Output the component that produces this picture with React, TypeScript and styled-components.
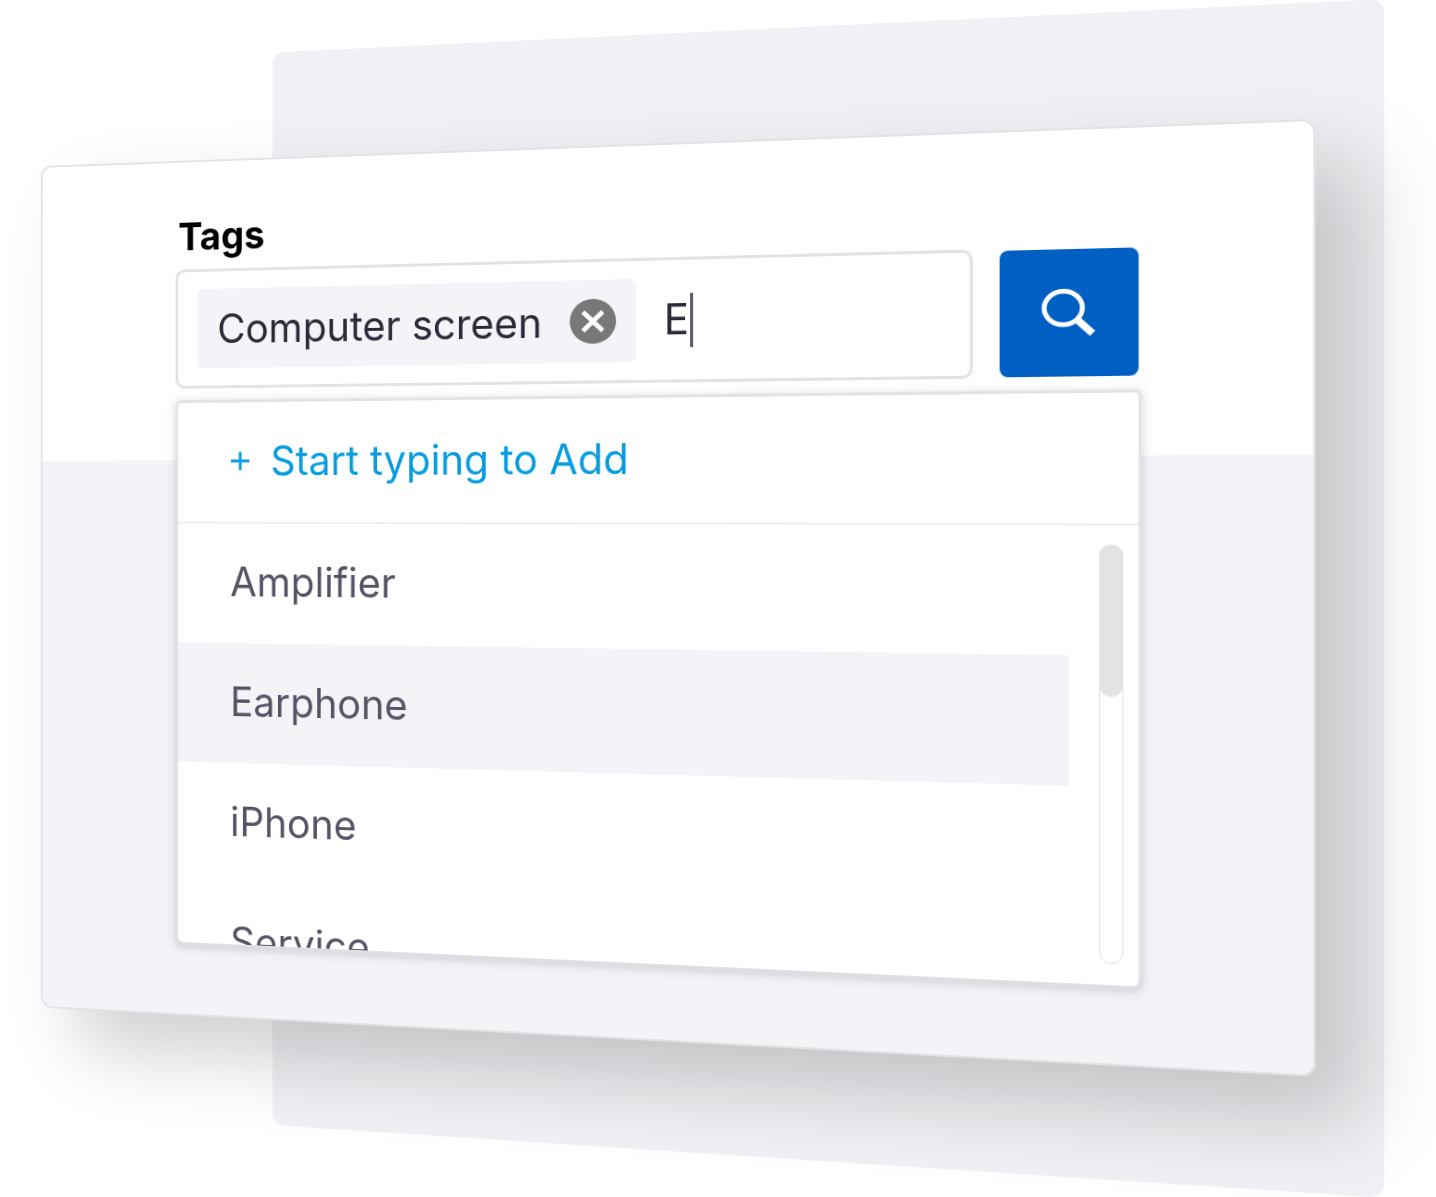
import React, { useState } from "react";
import styled, { createGlobalStyle } from "styled-components";

const GlobalStyle = createGlobalStyle`
  *, *::before, *::after { box-sizing: border-box; }
  html { overflow: hidden; }
  body {
    margin: 0;
    min-height: 100vh;
    background: #ffffff;
    font-family: Inter, "Liberation Sans", Arial, sans-serif;
  }
  button, input { font: inherit; color: inherit; }
`;

/* One tilted plane that carries the backdrop sheet and the card */
const Stage = styled.main`
  display: grid;
  padding-top: 35px;
  transform: perspective(859px) rotateY(-5deg);
  transform-origin: 44.3% 507px;
`;

const Backdrop = styled.div`
  grid-area: 1 / 1;
  margin: 0 102px 0 257px;
  border-radius: 12px;
  background: #f0f1f4;
`;

const Card = styled.section`
  grid-area: 1 / 1;
  display: flex;
  flex-direction: column;
  margin: 109px 162px 109px 0;
  padding: 54px 156px 75px 149px;
  border: 2px solid #e2e3e5;
  border-radius: 12px;
  background: linear-gradient(#ffffff 35%, #f3f4f8 35%) border-box;
  box-shadow: 41px 40px 80px rgba(0, 0, 0, 0.19);
`;

const Label = styled.label`
  align-self: flex-start;
  margin: 0 0 10px 3px;
  color: #000000;
  font-size: 40px;
  font-weight: 700;
  line-height: 48px;
`;

const SearchRow = styled.div`
  display: flex;
  align-items: center;
  gap: 25px;
`;

const Field = styled.div`
  display: flex;
  flex: 1;
  align-items: center;
  padding: 18px 21px;
  border: 3px solid #e2e3e5;
  border-radius: 10px;
  background: #ffffff;
  color: #2b2a38;
  font-size: 42px;
`;

const Chip = styled.span`
  display: flex;
  align-items: center;
  gap: 28px;
  height: 83px;
  margin-right: 28px;
  padding: 0 20px 0 22px;
  border-radius: 6px;
  background: #f3f4f8;
  line-height: 48px;
`;

const RemoveButton = styled.button`
  display: flex;
  padding: 0;
  border: 0;
  background: none;
`;

const TextInput = styled.input`
  width: 26px;
  height: 52px;
  padding: 0 0 2px;
  border: 0;
  outline: 0;
  background: none;
  caret-color: transparent;
`;

const Caret = styled.span`
  width: 3px;
  height: 54px;
  background: #5b5a6b;
`;

const SearchButton = styled.button`
  display: flex;
  align-items: center;
  justify-content: center;
  width: 128px;
  height: 122px;
  padding: 0;
  border: 0;
  border-radius: 8px;
  background: #005fc2;
  color: #ffffff;
`;

const Dropdown = styled.div`
  margin: 15px 0 0 3px;
  border-radius: 4px 4px 6px 6px;
  background: #ffffff;
  color: #555466;
  font-size: 42px;
  line-height: 48px;
  box-shadow:
    0 -1px 0 2px #e2e3e5,
    0 2px 4px 5px rgba(0, 0, 0, 0.06),
    0 2px 8px 9px rgba(0, 0, 0, 0.04);
`;

const AddButton = styled.button`
  display: flex;
  align-items: center;
  gap: 22px;
  width: 100%;
  height: 126px;
  padding: 0 58px 4px 57px;
  border: 0;
  border-bottom: 1px solid #e2e3e5;
  background: none;
  color: #079cdf;
  text-align: left;
`;

const ListArea = styled.div`
  display: flex;
  height: 439px;
`;

const OptionList = styled.ul`
  flex: 1;
  margin: 0;
  padding: 0;
  overflow: hidden;
  list-style: none;
`;

const Option = styled.li<{ $active: boolean }>`
  display: flex;
  align-items: center;
  height: 125px;
  padding: 0 57px 4px;
  background: ${({ $active }) => ($active ? "#f3f4f8" : "transparent")};
`;

const Track = styled.div`
  width: 22px;
  margin: 19px 14px 20px 28px;
  border: 1px solid #e2e3e5;
  border-radius: 11px;
`;

const Thumb = styled.div`
  height: 145px;
  margin: -1px;
  border-radius: 11px;
  background: #e2e3e5;
`;

const RemoveIcon = () => (
  <svg width="47" height="45" viewBox="0 0 47 45" aria-hidden="true">
    <ellipse cx="23.5" cy="22.5" rx="23.5" ry="22.5" fill="#787878" />
    <path d="M13.5 13 L33.5 32 M33.5 13 L13.5 32" stroke="#ffffff" strokeWidth="4.6" fill="none" />
  </svg>
);

const PlusIcon = () => (
  <svg width="22" height="22" viewBox="0 0 22 22" aria-hidden="true">
    <path d="M11 1.5 V20.5 M1 11 H21" stroke="currentColor" strokeWidth="3" fill="none" />
  </svg>
);

const SearchIcon = () => (
  <svg width="50" height="46" viewBox="0 0 50 46" aria-hidden="true">
    <ellipse cx="20" cy="18.3" rx="17.6" ry="16" stroke="currentColor" strokeWidth="4.6" fill="none" />
    <path d="M31.5 28.5 L47 43" stroke="currentColor" strokeWidth="7" fill="none" />
  </svg>
);

const options = ["Amplifier", "Earphone", "iPhone", "Service"];

export default function App() {
  const [tag, setTag] = useState<string | null>("Computer screen");
  const [query, setQuery] = useState("E");
  const [active, setActive] = useState("Earphone");

  return (
    <>
      <GlobalStyle />
      <Stage>
        <Backdrop />
        <Card>
          <Label htmlFor="tag-input">Tags</Label>
          <SearchRow>
            <Field>
              {tag && (
                <Chip>
                  {tag}
                  <RemoveButton type="button" aria-label={`Remove ${tag}`} onClick={() => setTag(null)}>
                    <RemoveIcon />
                  </RemoveButton>
                </Chip>
              )}
              <TextInput id="tag-input" type="text" value={query} onChange={(e) => setQuery(e.target.value)} />
              <Caret />
            </Field>
            <SearchButton type="button" aria-label="Search">
              <SearchIcon />
            </SearchButton>
          </SearchRow>
          <Dropdown>
            <AddButton type="button">
              <PlusIcon />
              Start typing to Add
            </AddButton>
            <ListArea>
              <OptionList role="listbox" aria-label="Tags">
                {options.map((name) => (
                  <Option
                    key={name}
                    role="option"
                    aria-selected={name === active}
                    $active={name === active}
                    onMouseEnter={() => setActive(name)}
                  >
                    {name}
                  </Option>
                ))}
              </OptionList>
              <Track>
                <Thumb />
              </Track>
            </ListArea>
          </Dropdown>
        </Card>
      </Stage>
    </>
  );
}
